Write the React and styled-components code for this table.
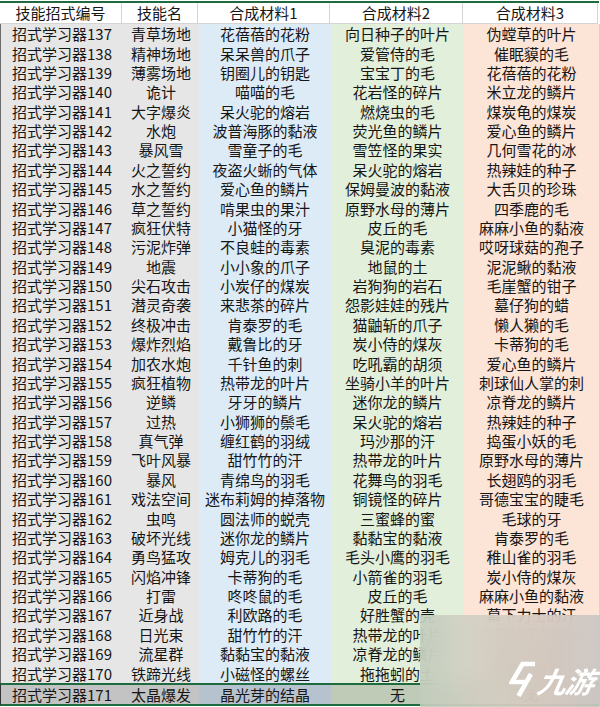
import React from "react";
import styled, { createGlobalStyle } from "styled-components";

const Global = createGlobalStyle`
  html, body { margin: 0; padding: 0; background: #ffffff; }
  body { font-family: "Noto Sans CJK SC", "Noto Sans", sans-serif; }
`;

const tones = {
  head: "#ffffff",
  gray: "#e7e6e6",
  blue: "#ddebf7",
  green: "#e2efda",
  orange: "#fce4d6",
};
const selTones = {
  gray: "#c4c3c3",
  blue: "#b6c2ce",
  green: "#bfcab7",
  orange: "#d6c3b7",
};

const COLS = "122px 76px 132px 133px 135px";

const Page = styled.div`
  position: relative;
  width: 600px;
  height: 707px;
  overflow: hidden;
  padding-top: 1px;
  box-sizing: border-box;
`;

const Table = styled.div`
  display: flex;
  flex-direction: column;
  width: 599px;
  border-top: 2px solid #1e6b3f;
  font-family: "Noto Sans CJK SC", "Noto Sans", sans-serif;
  font-size: 15px;
  color: #161616;
`;

const HeadRow = styled.div`
  display: grid;
  grid-template-columns: ${COLS} 1px;
  height: 21px;
`;

const HeadCell = styled.div`
  display: flex;
  align-items: center;
  justify-content: center;
  background: #ffffff;
  border-right: 1px solid #d4d4d4;
  border-bottom: 1px solid #d4d4d4;
  line-height: 20px;
  white-space: nowrap;
`;

const Row = styled.div`
  display: grid;
  grid-template-columns: ${COLS} 1px;
  height: ${(p) => (p.$selected ? "19px" : "19.38px")};
  border-left: 1px solid ${(p) => (p.$selected ? "#333" : "#6d6d6d")};
  ${(p) =>
    p.$selected &&
    `border-top: 2px solid #1e6b3f; border-bottom: 2px solid #1e6b3f;`}
`;

const Cell = styled.div`
  display: flex;
  align-items: center;
  justify-content: center;
  background: ${(p) => (p.$selected ? selTones[p.$tone] : tones[p.$tone])};
  line-height: 19px;
  white-space: nowrap;
  overflow: hidden;
`;

const EdgeCell = styled.div`
  background: #d4d4d4;
`;

const Watermark = styled.div`
  position: absolute;
  left: 420px;
  top: 615px;
  width: 180px;
  height: 92px;
  backdrop-filter: blur(12px);
  -webkit-backdrop-filter: blur(12px);
  background: linear-gradient(
    90deg,
    rgba(196, 206, 190, 0.86) 0%,
    rgba(212, 207, 196, 0.86) 40%,
    rgba(214, 203, 194, 0.88) 70%,
    rgba(201, 198, 195, 0.9) 100%
  );
  display: flex;
  align-items: flex-end;
  justify-content: flex-end;
  padding: 0 6px 10px 0;
  box-sizing: border-box;
  gap: 2px;
`;

const Brand = styled.span`
  font-family: "Noto Sans CJK SC", sans-serif;
  font-size: 29px;
  font-weight: 700;
  font-style: italic;
  color: #ffffff;
  line-height: 34px;
  letter-spacing: -1px;
  transform: skewX(-10deg);
`;

const LogoIcon = () => (
  <svg width="27" height="36" viewBox="0 0 27 36">
    <path
      d="M26 3 L13.5 3 L3 21 L15.5 21"
      fill="none"
      stroke="#ffffff"
      strokeWidth="4.6"
      strokeLinejoin="miter"
    />
    <path d="M22 13 L9.5 35" fill="none" stroke="#ffffff" strokeWidth="4.6" />
  </svg>
);

const rows = [
  ["137", "青草场地", "花蓓蓓的花粉", "向日种子的叶片", "伪螳草的叶片"],
  ["138", "精神场地", "呆呆兽的爪子", "爱管侍的毛", "催眠貘的毛"],
  ["139", "薄雾场地", "钥圈儿的钥匙", "宝宝丁的毛", "花蓓蓓的花粉"],
  ["140", "诡计", "喵喵的毛", "花岩怪的碎片", "米立龙的鳞片"],
  ["141", "大字爆炎", "呆火驼的熔岩", "燃烧虫的毛", "煤炭龟的煤炭"],
  ["142", "水炮", "波普海豚的黏液", "荧光鱼的鳞片", "爱心鱼的鳞片"],
  ["143", "暴风雪", "雪童子的毛", "雪笠怪的果实", "几何雪花的冰"],
  ["144", "火之誓约", "夜盗火蜥的气体", "呆火驼的熔岩", "热辣娃的种子"],
  ["145", "水之誓约", "爱心鱼的鳞片", "保姆曼波的黏液", "大舌贝的珍珠"],
  ["146", "草之誓约", "啃果虫的果汁", "原野水母的薄片", "四季鹿的毛"],
  ["147", "疯狂伏特", "小猫怪的牙", "皮丘的毛", "麻麻小鱼的黏液"],
  ["148", "污泥炸弹", "不良蛙的毒素", "臭泥的毒素", "哎呀球菇的孢子"],
  ["149", "地震", "小小象的爪子", "地鼠的土", "泥泥鳅的黏液"],
  ["150", "尖石攻击", "小炭仔的煤炭", "岩狗狗的岩石", "毛崖蟹的钳子"],
  ["151", "潜灵奇袭", "来悲茶的碎片", "怨影娃娃的残片", "墓仔狗的蜡"],
  ["152", "终极冲击", "肯泰罗的毛", "猫鼬斩的爪子", "懒人獭的毛"],
  ["153", "爆炸烈焰", "戴鲁比的牙", "炭小侍的煤灰", "卡蒂狗的毛"],
  ["154", "加农水炮", "千针鱼的刺", "吃吼霸的胡须", "爱心鱼的鳞片"],
  ["155", "疯狂植物", "热带龙的叶片", "坐骑小羊的叶片", "刺球仙人掌的刺"],
  ["156", "逆鳞", "牙牙的鳞片", "迷你龙的鳞片", "凉脊龙的鳞片"],
  ["157", "过热", "小狮狮的鬃毛", "呆火驼的熔岩", "热辣娃的种子"],
  ["158", "真气弹", "缠红鹤的羽绒", "玛沙那的汗", "捣蛋小妖的毛"],
  ["159", "飞叶风暴", "甜竹竹的汗", "热带龙的叶片", "原野水母的薄片"],
  ["160", "暴风", "青绵鸟的羽毛", "花舞鸟的羽毛", "长翅鸥的羽毛"],
  ["161", "戏法空间", "迷布莉姆的掉落物", "铜镜怪的碎片", "哥德宝宝的睫毛"],
  ["162", "虫鸣", "圆法师的蜕壳", "三蜜蜂的蜜", "毛球的牙"],
  ["163", "破坏光线", "迷你龙的鳞片", "黏黏宝的黏液", "肯泰罗的毛"],
  ["164", "勇鸟猛攻", "姆克儿的羽毛", "毛头小鹰的羽毛", "稚山雀的羽毛"],
  ["165", "闪焰冲锋", "卡蒂狗的毛", "小箭雀的羽毛", "炭小侍的煤灰"],
  ["166", "打雷", "咚咚鼠的毛", "皮丘的毛", "麻麻小鱼的黏液"],
  ["167", "近身战", "利欧路的毛", "好胜蟹的壳", "幕下力士的汗"],
  ["168", "日光束", "甜竹竹的汗", "热带龙的叶片", "向日种子的叶片"],
  ["169", "流星群", "黏黏宝的黏液", "凉脊龙的鳞片", "迷你龙的鳞片"],
  ["170", "铁蹄光线", "小磁怪的螺丝", "拖拖蚓的土", "铁哑铃的碎片"],
  ["171", "太晶爆发", "晶光芽的结晶", "无", "无"],
];

const toneOrder = ["gray", "gray", "blue", "green", "orange"];

export default function App() {
  return (
    <Page>
      <Global />
      <Table>
        <HeadRow>
          <HeadCell>技能招式编号</HeadCell>
          <HeadCell>技能名</HeadCell>
          <HeadCell>合成材料1</HeadCell>
          <HeadCell>合成材料2</HeadCell>
          <HeadCell>合成材料3</HeadCell>
        </HeadRow>
        {rows.map((r, i) => {
          const selected = i === rows.length - 1;
          const values = ["招式学习器" + r[0], r[1], r[2], r[3], r[4]];
          return (
            <Row key={r[0]} $selected={selected}>
              {values.map((v, j) => (
                <Cell key={j} $tone={toneOrder[j]} $selected={selected}>
                  {v}
                </Cell>
              ))}
              <EdgeCell />
            </Row>
          );
        })}
      </Table>
      <Watermark>
        <LogoIcon />
        <Brand>九游</Brand>
      </Watermark>
    </Page>
  );
}
